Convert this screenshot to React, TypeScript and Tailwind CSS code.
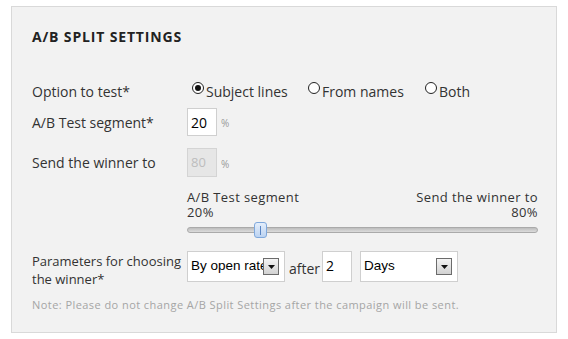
import React from 'react';

const font = { fontFamily: '"Open Sans", "DejaVu Sans", sans-serif' };

const Radio = ({ checked, label }: { checked?: boolean; label: string }) => (
  <label className="flex items-center text-[14px] text-[#333]">
    <span className="relative -mt-[7px] mr-[2px] flex h-[12px] w-[12px] items-center justify-center rounded-full border border-[#222] bg-white">
      {checked && <span className="h-[6px] w-[6px] rounded-full bg-[#111]" />}
    </span>
    {label}
  </label>
);

const Arrow = () => (
  <span className="absolute right-[5px] top-[6px] flex h-[17px] w-[16px] items-center justify-center border border-[#6b6b6b] bg-gradient-to-b from-[#f4f4f4] to-[#d2d2d2]">
    <svg width="7" height="4" viewBox="0 0 7 4">
      <path d="M0 0h7L3.5 4z" fill="#111" />
    </svg>
  </span>
);

const FakeSelect = ({ value, width }: { value: string; width: string }) => (
  <div
    className={`relative flex h-[31px] items-center border border-[#cfcfcf] bg-white pl-[3px] ${width}`}
  >
    <span
      className="whitespace-nowrap text-[13.5px] text-black"
      style={{ fontFamily: '"Liberation Sans", Arial, sans-serif' }}
    >
      {value}
    </span>
    <Arrow />
  </div>
);

export default function App() {
  return (
    <div className="h-[339px] w-[568px] bg-white pl-[11px] pt-[6px]" style={font}>
      <div className="h-[327px] w-[546px] border border-[#d9d9d9] bg-[#f2f2f2] pl-[20px] pr-[19px] pt-[20px]">
        <h2 className="h-[20px] text-[14px] font-bold leading-[20px] tracking-[0.06em] text-[#222]">
          A/B SPLIT SETTINGS
        </h2>

        <div className="mt-[34px] flex h-[20px] items-center">
          <div className="w-[155px] text-[14px] text-[#333]">Option to test*</div>
          <div className="ml-[5px] flex items-center">
            <div className="w-[116px]">
              <Radio checked label="Subject lines" />
            </div>
            <div className="w-[117px]">
              <Radio label="From names" />
            </div>
            <Radio label="Both" />
          </div>
        </div>

        <div className="mt-[7px] flex h-[28px] items-center">
          <div className="w-[155px] text-[14px] text-[#333]">A/B Test segment*</div>
          <div className="flex h-[28px] w-[30px] items-center border border-[#cfcfcf] bg-white pl-[3px] text-[14px] text-black">
            20
          </div>
          <span className="ml-[4px] mt-[3px] text-[10px] text-[#999]">%</span>
        </div>

        <div className="mt-[12px] flex h-[29px] items-center">
          <div className="w-[155px] text-[14px] text-[#333]">Send the winner to</div>
          <div className="flex h-[29px] w-[30px] items-center border border-[#d4d4d4] bg-[#e6e6e6] pl-[3px] text-[13px] text-[#bdbdbd]">
            80
          </div>
          <span className="ml-[4px] mt-[3px] text-[10px] text-[#999]">%</span>
        </div>

        <div className="ml-[155px] mt-[13px] w-[351px]">
          <div className="flex justify-between text-[13px] leading-[15px] tracking-[0.03em] text-[#333]">
            <div>
              <div>A/B Test segment</div>
              <div>20%</div>
            </div>
            <div className="text-right">
              <div>Send the winner to</div>
              <div>80%</div>
            </div>
          </div>
          <div className="relative mt-[2px] flex h-[16px] items-center">
            <div className="h-[6px] w-full rounded-full border border-[#aaa] bg-gradient-to-b from-[#bdbdbd] to-[#dcdcdc]" />
            <div className="absolute left-[67px] top-0 flex h-[16px] w-[13px] items-center justify-center rounded-[3px] border border-[#7fa8dc] bg-gradient-to-b from-[#e4eefb] to-[#bcd3f1]">
              <span className="h-[9px] w-px bg-[#5b86c4]" />
            </div>
          </div>
        </div>

        <div className="mt-[13px] flex items-start">
          <div className="w-[155px] whitespace-nowrap pt-[1px] text-[13px] leading-[18px] text-[#333]">
            Parameters for choosing
            <br />
            the winner*
          </div>
          <FakeSelect value="By open rate" width="w-[98px]" />
          <span className="ml-[4px] mt-[7px] text-[14px] text-[#333]">after</span>
          <div className="ml-[2px] flex h-[31px] w-[30px] items-start border border-[#cfcfcf] bg-white pl-[3px] pt-[3px] text-[14px] text-black">
            2
          </div>
          <div className="ml-[8px]">
            <FakeSelect value="Days" width="w-[98px]" />
          </div>
        </div>

        <p className="mt-[9px] text-[11px] tracking-[0.04em] text-[#a5a5a5]">
          Note: Please do not change A/B Split Settings after the campaign will be sent.
        </p>
      </div>
    </div>
  );
}
